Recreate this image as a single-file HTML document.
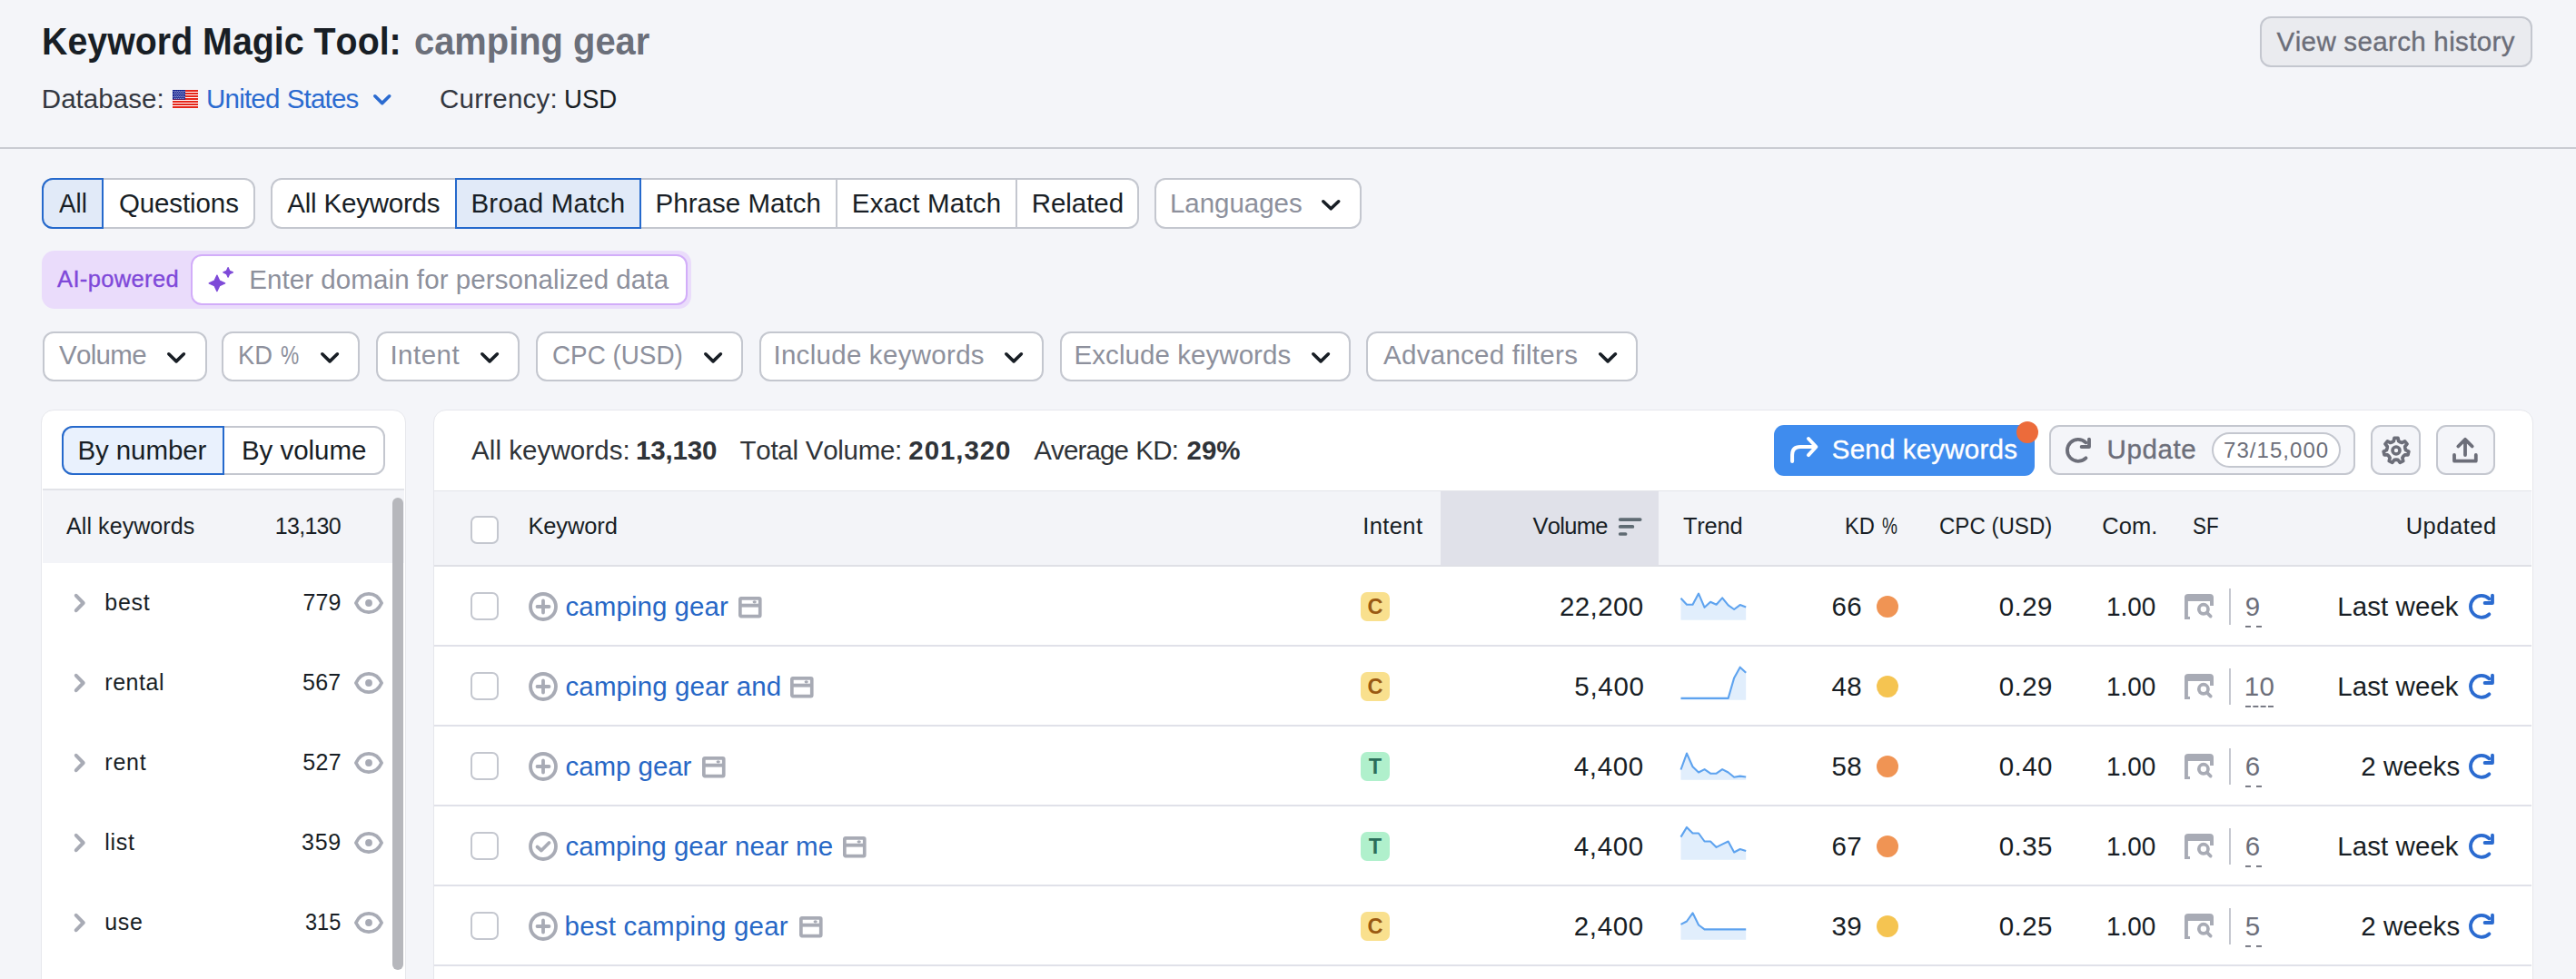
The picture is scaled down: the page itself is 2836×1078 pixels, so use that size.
<!DOCTYPE html>
<html><head><meta charset="utf-8"><title>Keyword Magic Tool</title>
<style>*{margin:0;padding:0}html,body{width:2836px;height:1078px;overflow:hidden;background:#f4f5f9;font-family:"Liberation Sans",sans-serif;position:relative}</style>
</head><body>
<div style="position:absolute;left:2488px;top:18px;width:299.5px;height:55.5px;box-sizing:border-box;border:2px solid #c4c7cf;border-radius:12px;background:#eaebef"></div>
<svg style="position:absolute;left:190px;top:99px;" width="28" height="20" viewBox="0 0 28 20"><rect width="28" height="20" fill="#fff"/><rect y="0.000" width="28" height="2.0" fill="#e5261a"/><rect y="3.000" width="28" height="2.0" fill="#e5261a"/><rect y="6.000" width="28" height="2.0" fill="#e5261a"/><rect y="9.000" width="28" height="2.0" fill="#e5261a"/><rect y="12.000" width="28" height="2.0" fill="#e5261a"/><rect y="15.000" width="28" height="2.0" fill="#e5261a"/><rect y="18.000" width="28" height="2.0" fill="#e5261a"/><rect width="14" height="10.6" fill="#0d1a8a"/><circle cx="1.20" cy="1.30" r="0.6" fill="#d0d3f0"/><circle cx="3.20" cy="1.30" r="0.6" fill="#d0d3f0"/><circle cx="5.20" cy="1.30" r="0.6" fill="#d0d3f0"/><circle cx="7.20" cy="1.30" r="0.6" fill="#d0d3f0"/><circle cx="9.20" cy="1.30" r="0.6" fill="#d0d3f0"/><circle cx="11.20" cy="1.30" r="0.6" fill="#d0d3f0"/><circle cx="13.20" cy="1.30" r="0.6" fill="#d0d3f0"/><circle cx="2.20" cy="2.90" r="0.6" fill="#d0d3f0"/><circle cx="4.20" cy="2.90" r="0.6" fill="#d0d3f0"/><circle cx="6.20" cy="2.90" r="0.6" fill="#d0d3f0"/><circle cx="8.20" cy="2.90" r="0.6" fill="#d0d3f0"/><circle cx="10.20" cy="2.90" r="0.6" fill="#d0d3f0"/><circle cx="12.20" cy="2.90" r="0.6" fill="#d0d3f0"/><circle cx="1.20" cy="4.50" r="0.6" fill="#d0d3f0"/><circle cx="3.20" cy="4.50" r="0.6" fill="#d0d3f0"/><circle cx="5.20" cy="4.50" r="0.6" fill="#d0d3f0"/><circle cx="7.20" cy="4.50" r="0.6" fill="#d0d3f0"/><circle cx="9.20" cy="4.50" r="0.6" fill="#d0d3f0"/><circle cx="11.20" cy="4.50" r="0.6" fill="#d0d3f0"/><circle cx="13.20" cy="4.50" r="0.6" fill="#d0d3f0"/><circle cx="2.20" cy="6.10" r="0.6" fill="#d0d3f0"/><circle cx="4.20" cy="6.10" r="0.6" fill="#d0d3f0"/><circle cx="6.20" cy="6.10" r="0.6" fill="#d0d3f0"/><circle cx="8.20" cy="6.10" r="0.6" fill="#d0d3f0"/><circle cx="10.20" cy="6.10" r="0.6" fill="#d0d3f0"/><circle cx="12.20" cy="6.10" r="0.6" fill="#d0d3f0"/><circle cx="1.20" cy="7.70" r="0.6" fill="#d0d3f0"/><circle cx="3.20" cy="7.70" r="0.6" fill="#d0d3f0"/><circle cx="5.20" cy="7.70" r="0.6" fill="#d0d3f0"/><circle cx="7.20" cy="7.70" r="0.6" fill="#d0d3f0"/><circle cx="9.20" cy="7.70" r="0.6" fill="#d0d3f0"/><circle cx="11.20" cy="7.70" r="0.6" fill="#d0d3f0"/><circle cx="13.20" cy="7.70" r="0.6" fill="#d0d3f0"/><circle cx="2.20" cy="9.30" r="0.6" fill="#d0d3f0"/><circle cx="4.20" cy="9.30" r="0.6" fill="#d0d3f0"/><circle cx="6.20" cy="9.30" r="0.6" fill="#d0d3f0"/><circle cx="8.20" cy="9.30" r="0.6" fill="#d0d3f0"/><circle cx="10.20" cy="9.30" r="0.6" fill="#d0d3f0"/><circle cx="12.20" cy="9.30" r="0.6" fill="#d0d3f0"/></svg>
<svg style="position:absolute;left:407.5px;top:101.2px;" width="25.5" height="17.4" viewBox="0 0 25.5 17.4"><path d="M4.8 4.8 L12.75 12.6 L20.7 4.8" stroke="#2b6bd0" stroke-width="3.6" fill="none" stroke-linecap="round" stroke-linejoin="round"/></svg>
<div style="position:absolute;left:0px;top:162px;width:2836px;height:2px;background:#c9cbd2"></div>
<div style="position:absolute;left:46px;top:196px;width:234.5px;height:55.5px;box-sizing:border-box;border:2px solid #c4c7cf;border-radius:12px;background:#fff"></div>
<div style="position:absolute;left:46px;top:196px;width:67.8px;height:55.5px;box-sizing:border-box;border:2px solid #2569cc;border-radius:12px 0 0 12px;background:#e1eaf8"></div>
<div style="position:absolute;left:297.5px;top:196px;width:956.3px;height:55.5px;box-sizing:border-box;border:2px solid #c4c7cf;border-radius:12px;background:#fff"></div>
<div style="position:absolute;left:501px;top:196px;width:205px;height:55.5px;box-sizing:border-box;border:2px solid #2569cc;background:#e1eaf8"></div>
<div style="position:absolute;left:920px;top:197px;width:2px;height:53.5px;background:#c4c7cf"></div>
<div style="position:absolute;left:1118.3px;top:197px;width:2.0px;height:53.5px;background:#c4c7cf"></div>
<div style="position:absolute;left:1270.5px;top:196px;width:228.0px;height:55.5px;box-sizing:border-box;border:2px solid #c4c7cf;border-radius:12px;background:#fff"></div>
<svg style="position:absolute;left:1452px;top:217.3px;" width="26.5" height="17.6" viewBox="0 0 26.5 17.6"><path d="M4.8 4.8 L13.25 12.799999999999999 L21.7 4.8" stroke="#181e25" stroke-width="3.6" fill="none" stroke-linecap="round" stroke-linejoin="round"/></svg>
<div style="position:absolute;left:46px;top:276px;width:715px;height:63.5px;background:#eadcfb;border-radius:14px"></div>
<div style="position:absolute;left:209.5px;top:280px;width:547.3px;height:55.80000000000001px;box-sizing:border-box;border:2px solid #d2adf9;border-radius:12px;background:#fff"></div>
<svg style="position:absolute;left:220px;top:288px;" width="45" height="40" viewBox="0 0 45 40"><path d="M18.90 15.10 L21.72 21.08 L27.70 23.90 L21.72 26.72 L18.90 32.70 L16.08 26.72 L10.10 23.90 L16.08 21.08Z M31.10 6.60 L32.80 10.20 L36.40 11.90 L32.80 13.60 L31.10 17.20 L29.40 13.60 L25.80 11.90 L29.40 10.20Z" fill="#7e4ad8" stroke="#7e4ad8" stroke-width="1.2" stroke-linejoin="round"/></svg>
<div style="position:absolute;left:46.5px;top:364.5px;width:181.0px;height:55.0px;box-sizing:border-box;border:2px solid #c4c7cf;border-radius:12px;background:#fff"></div>
<svg style="position:absolute;left:181.0px;top:385px;" width="26.2" height="17.7" viewBox="0 0 26.2 17.7"><path d="M4.8 4.8 L13.1 12.899999999999999 L21.4 4.8" stroke="#181e25" stroke-width="3.6" fill="none" stroke-linecap="round" stroke-linejoin="round"/></svg>
<div style="position:absolute;left:244.3px;top:364.5px;width:152.2px;height:55.0px;box-sizing:border-box;border:2px solid #c4c7cf;border-radius:12px;background:#fff"></div>
<svg style="position:absolute;left:350.0px;top:385px;" width="26.2" height="17.7" viewBox="0 0 26.2 17.7"><path d="M4.8 4.8 L13.1 12.899999999999999 L21.4 4.8" stroke="#181e25" stroke-width="3.6" fill="none" stroke-linecap="round" stroke-linejoin="round"/></svg>
<div style="position:absolute;left:413.5px;top:364.5px;width:158.70000000000005px;height:55.0px;box-sizing:border-box;border:2px solid #c4c7cf;border-radius:12px;background:#fff"></div>
<svg style="position:absolute;left:525.7px;top:385px;" width="26.2" height="17.7" viewBox="0 0 26.2 17.7"><path d="M4.8 4.8 L13.1 12.899999999999999 L21.4 4.8" stroke="#181e25" stroke-width="3.6" fill="none" stroke-linecap="round" stroke-linejoin="round"/></svg>
<div style="position:absolute;left:589.6px;top:364.5px;width:228.69999999999993px;height:55.0px;box-sizing:border-box;border:2px solid #c4c7cf;border-radius:12px;background:#fff"></div>
<svg style="position:absolute;left:771.8px;top:385px;" width="26.2" height="17.7" viewBox="0 0 26.2 17.7"><path d="M4.8 4.8 L13.1 12.899999999999999 L21.4 4.8" stroke="#181e25" stroke-width="3.6" fill="none" stroke-linecap="round" stroke-linejoin="round"/></svg>
<div style="position:absolute;left:835.6px;top:364.5px;width:313.6px;height:55.0px;box-sizing:border-box;border:2px solid #c4c7cf;border-radius:12px;background:#fff"></div>
<svg style="position:absolute;left:1102.7px;top:385px;" width="26.2" height="17.7" viewBox="0 0 26.2 17.7"><path d="M4.8 4.8 L13.1 12.899999999999999 L21.4 4.8" stroke="#181e25" stroke-width="3.6" fill="none" stroke-linecap="round" stroke-linejoin="round"/></svg>
<div style="position:absolute;left:1166.5px;top:364.5px;width:320.5px;height:55.0px;box-sizing:border-box;border:2px solid #c4c7cf;border-radius:12px;background:#fff"></div>
<svg style="position:absolute;left:1440.5px;top:385px;" width="26.2" height="17.7" viewBox="0 0 26.2 17.7"><path d="M4.8 4.8 L13.1 12.899999999999999 L21.4 4.8" stroke="#181e25" stroke-width="3.6" fill="none" stroke-linecap="round" stroke-linejoin="round"/></svg>
<div style="position:absolute;left:1504.3px;top:364.5px;width:298.70000000000005px;height:55.0px;box-sizing:border-box;border:2px solid #c4c7cf;border-radius:12px;background:#fff"></div>
<svg style="position:absolute;left:1756.5px;top:385px;" width="26.2" height="17.7" viewBox="0 0 26.2 17.7"><path d="M4.8 4.8 L13.1 12.899999999999999 L21.4 4.8" stroke="#181e25" stroke-width="3.6" fill="none" stroke-linecap="round" stroke-linejoin="round"/></svg>
<div style="position:absolute;left:45px;top:451px;width:401.8px;height:647px;box-sizing:border-box;border:1.5px solid #e6e7ec;border-radius:14px 14px 0 0;background:#fff"></div>
<div style="position:absolute;left:67.6px;top:468.5px;width:356.70000000000005px;height:54.700000000000045px;box-sizing:border-box;border:2px solid #c4c7cf;border-radius:12px;background:#fff"></div>
<div style="position:absolute;left:67.6px;top:468.5px;width:179.0px;height:54.700000000000045px;box-sizing:border-box;border:2px solid #2569cc;border-radius:12px 0 0 12px;background:#e9f1fd"></div>
<div style="position:absolute;left:46.5px;top:538px;width:398.8px;height:2px;background:#e2e3e8"></div>
<div style="position:absolute;left:46.5px;top:540px;width:398.8px;height:79.70000000000005px;background:#f3f4f8"></div>
<div style="position:absolute;left:432px;top:548px;width:11.800000000000011px;height:519.5999999999999px;background:#b6b7bc;border-radius:6px"></div>
<svg style="position:absolute;left:80px;top:652px;" width="16" height="24" viewBox="0 0 16 24"><path d="M3.8 3.8 L11.7 12 L3.8 20.2" fill="none" stroke="#a8abb5" stroke-width="4" stroke-linecap="round" stroke-linejoin="round"/></svg>
<svg style="position:absolute;left:390px;top:652px;" width="32" height="24" viewBox="0 0 32 24"><path d="M1.9 12 C8 -1.5 24 -1.5 30.1 12 C24 25.5 8 25.5 1.9 12Z" fill="none" stroke="#a8abb5" stroke-width="3.7" stroke-linejoin="round"/><circle cx="16" cy="12" r="3.9" fill="#a8abb5"/></svg>
<svg style="position:absolute;left:80px;top:740px;" width="16" height="24" viewBox="0 0 16 24"><path d="M3.8 3.8 L11.7 12 L3.8 20.2" fill="none" stroke="#a8abb5" stroke-width="4" stroke-linecap="round" stroke-linejoin="round"/></svg>
<svg style="position:absolute;left:390px;top:740px;" width="32" height="24" viewBox="0 0 32 24"><path d="M1.9 12 C8 -1.5 24 -1.5 30.1 12 C24 25.5 8 25.5 1.9 12Z" fill="none" stroke="#a8abb5" stroke-width="3.7" stroke-linejoin="round"/><circle cx="16" cy="12" r="3.9" fill="#a8abb5"/></svg>
<svg style="position:absolute;left:80px;top:828px;" width="16" height="24" viewBox="0 0 16 24"><path d="M3.8 3.8 L11.7 12 L3.8 20.2" fill="none" stroke="#a8abb5" stroke-width="4" stroke-linecap="round" stroke-linejoin="round"/></svg>
<svg style="position:absolute;left:390px;top:828px;" width="32" height="24" viewBox="0 0 32 24"><path d="M1.9 12 C8 -1.5 24 -1.5 30.1 12 C24 25.5 8 25.5 1.9 12Z" fill="none" stroke="#a8abb5" stroke-width="3.7" stroke-linejoin="round"/><circle cx="16" cy="12" r="3.9" fill="#a8abb5"/></svg>
<svg style="position:absolute;left:80px;top:916px;" width="16" height="24" viewBox="0 0 16 24"><path d="M3.8 3.8 L11.7 12 L3.8 20.2" fill="none" stroke="#a8abb5" stroke-width="4" stroke-linecap="round" stroke-linejoin="round"/></svg>
<svg style="position:absolute;left:390px;top:916px;" width="32" height="24" viewBox="0 0 32 24"><path d="M1.9 12 C8 -1.5 24 -1.5 30.1 12 C24 25.5 8 25.5 1.9 12Z" fill="none" stroke="#a8abb5" stroke-width="3.7" stroke-linejoin="round"/><circle cx="16" cy="12" r="3.9" fill="#a8abb5"/></svg>
<svg style="position:absolute;left:80px;top:1004px;" width="16" height="24" viewBox="0 0 16 24"><path d="M3.8 3.8 L11.7 12 L3.8 20.2" fill="none" stroke="#a8abb5" stroke-width="4" stroke-linecap="round" stroke-linejoin="round"/></svg>
<svg style="position:absolute;left:390px;top:1004px;" width="32" height="24" viewBox="0 0 32 24"><path d="M1.9 12 C8 -1.5 24 -1.5 30.1 12 C24 25.5 8 25.5 1.9 12Z" fill="none" stroke="#a8abb5" stroke-width="3.7" stroke-linejoin="round"/><circle cx="16" cy="12" r="3.9" fill="#a8abb5"/></svg>
<div style="position:absolute;left:476.8px;top:450.8px;width:2312.2px;height:647.2px;box-sizing:border-box;border:1.5px solid #e6e7ec;border-radius:14px 14px 0 0;background:#fff"></div>
<div style="position:absolute;left:1953px;top:468px;width:287px;height:55.799999999999955px;background:#3f8cee;border-radius:11px"></div>
<svg style="position:absolute;left:1965px;top:478px;" width="42" height="36" viewBox="0 0 42 36"><path d="M8.1 30 L8.1 23 Q8.1 14 17 14 L33.5 14 M26 5 L34.4 14 L26 23.1" fill="none" stroke="#fff" stroke-width="4" stroke-linecap="round" stroke-linejoin="round"/></svg>
<div style="position:absolute;left:2220px;top:463.8px;width:24px;height:24px;border-radius:50%;background:#ec6b3b"></div>
<div style="position:absolute;left:2256.4px;top:468.4px;width:336.9000000000001px;height:55.0px;box-sizing:border-box;border:2px solid #c4c7cf;border-radius:11px;background:#f4f5f9"></div>
<svg style="position:absolute;left:2274px;top:482px;overflow:visible" width="28" height="28" viewBox="0 0 28 28"><path d="M22.4 22.3 A12 12 0 1 1 22.4 5.3" fill="none" stroke="#6c6e79" stroke-width="3.8" stroke-linecap="round"/><path d="M17.6 10 L26 10 L26 1.6" fill="none" stroke="#6c6e79" stroke-width="3.8" stroke-linecap="round" stroke-linejoin="round"/></svg>
<div style="position:absolute;left:2434.7px;top:476.3px;width:141.9000000000001px;height:39.099999999999966px;box-sizing:border-box;border:2px solid #c4c7cf;border-radius:20px;background:#fff"></div>
<div style="position:absolute;left:2610.4px;top:468.4px;width:54.90000000000009px;height:55.0px;box-sizing:border-box;border:2px solid #c4c7cf;border-radius:11px;background:#f4f5f9"></div>
<div style="position:absolute;left:2682.3px;top:468.4px;width:65.19999999999982px;height:55.0px;box-sizing:border-box;border:2px solid #c4c7cf;border-radius:11px;background:#f4f5f9"></div>
<svg style="position:absolute;left:2621.8px;top:479.8px;" width="32" height="32" viewBox="0 0 32 32"><path d="M11.58 6.81 L13.26 5.76 L14.07 2.24 L17.93 2.24 L18.74 5.76 L20.43 6.81 L22.29 7.47 L25.56 5.91 L27.97 8.93 L25.72 11.76 L25.94 13.73 L26.59 15.60 L29.85 17.18 L28.99 20.95 L25.37 20.95 L23.97 22.36 L22.91 24.03 L23.72 27.56 L20.23 29.24 L17.97 26.42 L16.00 26.20 L14.03 26.42 L11.77 29.24 L8.28 27.56 L9.09 24.03 L8.02 22.36 L6.63 20.95 L3.01 20.95 L2.15 17.18 L5.41 15.60 L6.06 13.73 L6.28 11.76 L4.03 8.93 L6.44 5.91 L9.71 7.47 Z" fill="none" stroke="#6c6e79" stroke-width="3.7" stroke-linejoin="round"/><circle cx="16" cy="16" r="4" fill="none" stroke="#6c6e79" stroke-width="3.6"/></svg>
<svg style="position:absolute;left:2698px;top:480px;" width="32" height="32" viewBox="0 0 32 32"><path d="M16 21 L16 4.5 M8.3 11.5 L16 3.8 L23.7 11.5 M4 21 L4 27.6 L27.8 27.6 L27.8 21" fill="none" stroke="#6c6e79" stroke-width="3.8" stroke-linecap="round" stroke-linejoin="round"/></svg>
<div style="position:absolute;left:478.3px;top:540px;width:2309.2px;height:82px;background:#f3f4f8"></div>
<div style="position:absolute;left:478.3px;top:540px;width:2309.2px;height:1.2000000000000455px;background:#e3e4e9"></div>
<div style="position:absolute;left:1586px;top:541.2px;width:239.79999999999995px;height:80.79999999999995px;background:#e0e1e9"></div>
<div style="position:absolute;left:478.3px;top:622px;width:2309.2px;height:2px;background:#dfe0e6"></div>
<div style="position:absolute;left:518.3px;top:568.3px;width:31.200000000000045px;height:31.200000000000045px;box-sizing:border-box;border:2px solid #c4c7cf;border-radius:7px;background:#fff"></div>
<svg style="position:absolute;left:1780px;top:568px;" width="28" height="24" viewBox="0 0 28 24"><g stroke="#5f6b73" stroke-width="3.7" stroke-linecap="round"><path d="M3.7 4.1 L25.7 4.1"/><path d="M3.7 11.9 L17.4 11.9"/><path d="M3.7 20 L9.6 20"/></g></svg>
<div style="position:absolute;left:478.3px;top:710px;width:2309.2px;height:2px;background:#e0e1e9"></div>
<div style="position:absolute;left:518.3px;top:652px;width:31.200000000000045px;height:31.200000000000045px;box-sizing:border-box;border:2px solid #c4c7cf;border-radius:7px;background:#fff"></div>
<svg style="position:absolute;left:582px;top:652px;" width="32" height="32" viewBox="0 0 32 32"><circle cx="16" cy="16" r="14" fill="none" stroke="#a8abb5" stroke-width="3.8"/><path d="M16 9.5 L16 22.5 M9.5 16 L22.5 16" stroke="#a8abb5" stroke-width="3.8" stroke-linecap="round"/></svg>
<svg style="position:absolute;left:813.2px;top:657.2px;" width="26" height="24" viewBox="0 0 26 24"><rect x="1.85" y="1.85" width="21.9" height="19.7" rx="1" fill="none" stroke="#a8abb5" stroke-width="3.7"/><path d="M2 9.65 L24 9.65" stroke="#a8abb5" stroke-width="3.9"/><ellipse cx="17.7" cy="5.8" rx="2.1" ry="1.6" fill="#a8abb5"/></svg>
<div style="position:absolute;left:1498px;top:652px;width:32px;height:32px;border-radius:7px;background:#f9e08e;color:#9a5a12;font:bold 23.5px/33px 'Liberation Sans',sans-serif;text-align:center">C</div>
<svg style="position:absolute;left:1848.5px;top:624px;" width="76" height="62" viewBox="0 0 76 62"><path d="M1.5 58.8 L1.50 34.70 L8.02 41.80 L14.54 41.80 L21.05 29.60 L27.57 44.80 L34.09 38.70 L40.61 41.80 L47.13 34.40 L53.65 42.40 L60.16 47.00 L66.68 42.10 L73.20 44.50 L73.2 58.8Z" fill="#e1eefc"/><polyline points="1.50,34.70 8.02,41.80 14.54,41.80 21.05,29.60 27.57,44.80 34.09,38.70 40.61,41.80 47.13,34.40 53.65,42.40 60.16,47.00 66.68,42.10 73.20,44.50" fill="none" stroke="#5ea3ef" stroke-width="2.1" stroke-linejoin="round"/></svg>
<div style="position:absolute;left:2066px;top:656px;width:24px;height:24px;border-radius:50%;background:#f09454"></div>
<svg style="position:absolute;left:2405px;top:654px;" width="32" height="28" viewBox="0 0 32 28"><path d="M6 27 L1.9 27 L1.9 4.1 Q1.9 2 4 2 L27.9 2 Q30 2 30 4.1 L30 13" fill="none" stroke="#a8abb5" stroke-width="4" stroke-linejoin="round"/><path d="M1.9 5 L30 5" stroke="#a8abb5" stroke-width="6"/><circle cx="20.9" cy="16.8" r="5.1" fill="none" stroke="#a8abb5" stroke-width="3.7"/><path d="M24.6 20.5 L28.7 24.6" stroke="#a8abb5" stroke-width="3.7" stroke-linecap="round"/></svg>
<div style="position:absolute;left:2454.3px;top:648.2px;width:2.0px;height:39.69999999999993px;background:#c4c7cf"></div>
<svg style="position:absolute;left:2472px;top:689px;" width="18" height="2" viewBox="0 0 18 2"><rect x="0" y="0" width="6" height="1.8" fill="#6c6e79"/><rect x="12" y="0" width="6" height="1.8" fill="#6c6e79"/></svg>
<svg style="position:absolute;left:2718px;top:654px;overflow:visible" width="28" height="28" viewBox="0 0 28 28"><path d="M22.4 22.3 A12 12 0 1 1 22.4 5.3" fill="none" stroke="#2b6bd0" stroke-width="3.8" stroke-linecap="round"/><path d="M17.6 10 L26 10 L26 1.6" fill="none" stroke="#2b6bd0" stroke-width="3.8" stroke-linecap="round" stroke-linejoin="round"/></svg>
<div style="position:absolute;left:478.3px;top:798px;width:2309.2px;height:2px;background:#e0e1e9"></div>
<div style="position:absolute;left:518.3px;top:740px;width:31.200000000000045px;height:31.200000000000045px;box-sizing:border-box;border:2px solid #c4c7cf;border-radius:7px;background:#fff"></div>
<svg style="position:absolute;left:582px;top:740px;" width="32" height="32" viewBox="0 0 32 32"><circle cx="16" cy="16" r="14" fill="none" stroke="#a8abb5" stroke-width="3.8"/><path d="M16 9.5 L16 22.5 M9.5 16 L22.5 16" stroke="#a8abb5" stroke-width="3.8" stroke-linecap="round"/></svg>
<svg style="position:absolute;left:869.5px;top:745.2px;" width="26" height="24" viewBox="0 0 26 24"><rect x="1.85" y="1.85" width="21.9" height="19.7" rx="1" fill="none" stroke="#a8abb5" stroke-width="3.7"/><path d="M2 9.65 L24 9.65" stroke="#a8abb5" stroke-width="3.9"/><ellipse cx="17.7" cy="5.8" rx="2.1" ry="1.6" fill="#a8abb5"/></svg>
<div style="position:absolute;left:1498px;top:740px;width:32px;height:32px;border-radius:7px;background:#f9e08e;color:#9a5a12;font:bold 23.5px/33px 'Liberation Sans',sans-serif;text-align:center">C</div>
<svg style="position:absolute;left:1848.5px;top:712px;" width="76" height="62" viewBox="0 0 76 62"><path d="M1.5 58.8 L1.50 56.90 L8.02 56.90 L14.54 56.90 L21.05 56.90 L27.57 56.90 L34.09 56.90 L40.61 56.90 L47.13 56.90 L53.65 56.90 L60.16 34.40 L66.68 22.70 L73.20 28.80 L73.2 58.8Z" fill="#e1eefc"/><polyline points="1.50,56.90 8.02,56.90 14.54,56.90 21.05,56.90 27.57,56.90 34.09,56.90 40.61,56.90 47.13,56.90 53.65,56.90 60.16,34.40 66.68,22.70 73.20,28.80" fill="none" stroke="#5ea3ef" stroke-width="2.1" stroke-linejoin="round"/></svg>
<div style="position:absolute;left:2066px;top:744px;width:24px;height:24px;border-radius:50%;background:#f5c451"></div>
<svg style="position:absolute;left:2405px;top:742px;" width="32" height="28" viewBox="0 0 32 28"><path d="M6 27 L1.9 27 L1.9 4.1 Q1.9 2 4 2 L27.9 2 Q30 2 30 4.1 L30 13" fill="none" stroke="#a8abb5" stroke-width="4" stroke-linejoin="round"/><path d="M1.9 5 L30 5" stroke="#a8abb5" stroke-width="6"/><circle cx="20.9" cy="16.8" r="5.1" fill="none" stroke="#a8abb5" stroke-width="3.7"/><path d="M24.6 20.5 L28.7 24.6" stroke="#a8abb5" stroke-width="3.7" stroke-linecap="round"/></svg>
<div style="position:absolute;left:2454.3px;top:736.2px;width:2.0px;height:39.69999999999993px;background:#c4c7cf"></div>
<svg style="position:absolute;left:2472px;top:777px;" width="31" height="2" viewBox="0 0 31 2"><rect x="0.00" y="0" width="6" height="1.8" fill="#6c6e79"/><rect x="8.33" y="0" width="6" height="1.8" fill="#6c6e79"/><rect x="16.66" y="0" width="6" height="1.8" fill="#6c6e79"/><rect x="24.99" y="0" width="6" height="1.8" fill="#6c6e79"/></svg>
<svg style="position:absolute;left:2718px;top:742px;overflow:visible" width="28" height="28" viewBox="0 0 28 28"><path d="M22.4 22.3 A12 12 0 1 1 22.4 5.3" fill="none" stroke="#2b6bd0" stroke-width="3.8" stroke-linecap="round"/><path d="M17.6 10 L26 10 L26 1.6" fill="none" stroke="#2b6bd0" stroke-width="3.8" stroke-linecap="round" stroke-linejoin="round"/></svg>
<div style="position:absolute;left:478.3px;top:886px;width:2309.2px;height:2px;background:#e0e1e9"></div>
<div style="position:absolute;left:518.3px;top:828px;width:31.200000000000045px;height:31.200000000000045px;box-sizing:border-box;border:2px solid #c4c7cf;border-radius:7px;background:#fff"></div>
<svg style="position:absolute;left:582px;top:828px;" width="32" height="32" viewBox="0 0 32 32"><circle cx="16" cy="16" r="14" fill="none" stroke="#a8abb5" stroke-width="3.8"/><path d="M16 9.5 L16 22.5 M9.5 16 L22.5 16" stroke="#a8abb5" stroke-width="3.8" stroke-linecap="round"/></svg>
<svg style="position:absolute;left:772.5px;top:833.2px;" width="26" height="24" viewBox="0 0 26 24"><rect x="1.85" y="1.85" width="21.9" height="19.7" rx="1" fill="none" stroke="#a8abb5" stroke-width="3.7"/><path d="M2 9.65 L24 9.65" stroke="#a8abb5" stroke-width="3.9"/><ellipse cx="17.7" cy="5.8" rx="2.1" ry="1.6" fill="#a8abb5"/></svg>
<div style="position:absolute;left:1498px;top:828px;width:32px;height:32px;border-radius:7px;background:#b0f0cc;color:#2b6e5a;font:bold 23.5px/33px 'Liberation Sans',sans-serif;text-align:center">T</div>
<svg style="position:absolute;left:1848.5px;top:800px;" width="76" height="62" viewBox="0 0 76 62"><path d="M1.5 58.8 L1.50 47.50 L8.02 29.60 L14.54 44.30 L21.05 50.50 L27.57 47.10 L34.09 51.70 L40.61 51.70 L47.13 47.10 L53.65 50.50 L60.16 55.70 L66.68 54.60 L73.20 55.50 L73.2 58.8Z" fill="#e1eefc"/><polyline points="1.50,47.50 8.02,29.60 14.54,44.30 21.05,50.50 27.57,47.10 34.09,51.70 40.61,51.70 47.13,47.10 53.65,50.50 60.16,55.70 66.68,54.60 73.20,55.50" fill="none" stroke="#5ea3ef" stroke-width="2.1" stroke-linejoin="round"/></svg>
<div style="position:absolute;left:2066px;top:832px;width:24px;height:24px;border-radius:50%;background:#f09454"></div>
<svg style="position:absolute;left:2405px;top:830px;" width="32" height="28" viewBox="0 0 32 28"><path d="M6 27 L1.9 27 L1.9 4.1 Q1.9 2 4 2 L27.9 2 Q30 2 30 4.1 L30 13" fill="none" stroke="#a8abb5" stroke-width="4" stroke-linejoin="round"/><path d="M1.9 5 L30 5" stroke="#a8abb5" stroke-width="6"/><circle cx="20.9" cy="16.8" r="5.1" fill="none" stroke="#a8abb5" stroke-width="3.7"/><path d="M24.6 20.5 L28.7 24.6" stroke="#a8abb5" stroke-width="3.7" stroke-linecap="round"/></svg>
<div style="position:absolute;left:2454.3px;top:824.2px;width:2.0px;height:39.69999999999993px;background:#c4c7cf"></div>
<svg style="position:absolute;left:2472px;top:865px;" width="18" height="2" viewBox="0 0 18 2"><rect x="0" y="0" width="6" height="1.8" fill="#6c6e79"/><rect x="12" y="0" width="6" height="1.8" fill="#6c6e79"/></svg>
<svg style="position:absolute;left:2718px;top:830px;overflow:visible" width="28" height="28" viewBox="0 0 28 28"><path d="M22.4 22.3 A12 12 0 1 1 22.4 5.3" fill="none" stroke="#2b6bd0" stroke-width="3.8" stroke-linecap="round"/><path d="M17.6 10 L26 10 L26 1.6" fill="none" stroke="#2b6bd0" stroke-width="3.8" stroke-linecap="round" stroke-linejoin="round"/></svg>
<div style="position:absolute;left:478.3px;top:974px;width:2309.2px;height:2px;background:#e0e1e9"></div>
<div style="position:absolute;left:518.3px;top:916px;width:31.200000000000045px;height:31.200000000000045px;box-sizing:border-box;border:2px solid #c4c7cf;border-radius:7px;background:#fff"></div>
<svg style="position:absolute;left:582px;top:916px;" width="32" height="32" viewBox="0 0 32 32"><circle cx="16" cy="16" r="14" fill="none" stroke="#a8abb5" stroke-width="3.8"/><path d="M9.5 16.5 L14 20.5 L22.5 12" fill="none" stroke="#a8abb5" stroke-width="3.8" stroke-linecap="round" stroke-linejoin="round"/></svg>
<svg style="position:absolute;left:927.8px;top:921.2px;" width="26" height="24" viewBox="0 0 26 24"><rect x="1.85" y="1.85" width="21.9" height="19.7" rx="1" fill="none" stroke="#a8abb5" stroke-width="3.7"/><path d="M2 9.65 L24 9.65" stroke="#a8abb5" stroke-width="3.9"/><ellipse cx="17.7" cy="5.8" rx="2.1" ry="1.6" fill="#a8abb5"/></svg>
<div style="position:absolute;left:1498px;top:916px;width:32px;height:32px;border-radius:7px;background:#b0f0cc;color:#2b6e5a;font:bold 23.5px/33px 'Liberation Sans',sans-serif;text-align:center">T</div>
<svg style="position:absolute;left:1848.5px;top:888px;" width="76" height="62" viewBox="0 0 76 62"><path d="M1.5 58.8 L1.50 33.60 L8.02 22.90 L14.54 29.50 L21.05 29.50 L27.57 38.50 L34.09 38.50 L40.61 44.90 L47.13 41.60 L53.65 38.50 L60.16 50.50 L66.68 47.00 L73.20 48.90 L73.2 58.8Z" fill="#e1eefc"/><polyline points="1.50,33.60 8.02,22.90 14.54,29.50 21.05,29.50 27.57,38.50 34.09,38.50 40.61,44.90 47.13,41.60 53.65,38.50 60.16,50.50 66.68,47.00 73.20,48.90" fill="none" stroke="#5ea3ef" stroke-width="2.1" stroke-linejoin="round"/></svg>
<div style="position:absolute;left:2066px;top:920px;width:24px;height:24px;border-radius:50%;background:#f09454"></div>
<svg style="position:absolute;left:2405px;top:918px;" width="32" height="28" viewBox="0 0 32 28"><path d="M6 27 L1.9 27 L1.9 4.1 Q1.9 2 4 2 L27.9 2 Q30 2 30 4.1 L30 13" fill="none" stroke="#a8abb5" stroke-width="4" stroke-linejoin="round"/><path d="M1.9 5 L30 5" stroke="#a8abb5" stroke-width="6"/><circle cx="20.9" cy="16.8" r="5.1" fill="none" stroke="#a8abb5" stroke-width="3.7"/><path d="M24.6 20.5 L28.7 24.6" stroke="#a8abb5" stroke-width="3.7" stroke-linecap="round"/></svg>
<div style="position:absolute;left:2454.3px;top:912.2px;width:2.0px;height:39.69999999999993px;background:#c4c7cf"></div>
<svg style="position:absolute;left:2472px;top:953px;" width="18" height="2" viewBox="0 0 18 2"><rect x="0" y="0" width="6" height="1.8" fill="#6c6e79"/><rect x="12" y="0" width="6" height="1.8" fill="#6c6e79"/></svg>
<svg style="position:absolute;left:2718px;top:918px;overflow:visible" width="28" height="28" viewBox="0 0 28 28"><path d="M22.4 22.3 A12 12 0 1 1 22.4 5.3" fill="none" stroke="#2b6bd0" stroke-width="3.8" stroke-linecap="round"/><path d="M17.6 10 L26 10 L26 1.6" fill="none" stroke="#2b6bd0" stroke-width="3.8" stroke-linecap="round" stroke-linejoin="round"/></svg>
<div style="position:absolute;left:478.3px;top:1062px;width:2309.2px;height:2px;background:#e0e1e9"></div>
<div style="position:absolute;left:518.3px;top:1004px;width:31.200000000000045px;height:31.200000000000045px;box-sizing:border-box;border:2px solid #c4c7cf;border-radius:7px;background:#fff"></div>
<svg style="position:absolute;left:582px;top:1004px;" width="32" height="32" viewBox="0 0 32 32"><circle cx="16" cy="16" r="14" fill="none" stroke="#a8abb5" stroke-width="3.8"/><path d="M16 9.5 L16 22.5 M9.5 16 L22.5 16" stroke="#a8abb5" stroke-width="3.8" stroke-linecap="round"/></svg>
<svg style="position:absolute;left:879.5px;top:1009.2px;" width="26" height="24" viewBox="0 0 26 24"><rect x="1.85" y="1.85" width="21.9" height="19.7" rx="1" fill="none" stroke="#a8abb5" stroke-width="3.7"/><path d="M2 9.65 L24 9.65" stroke="#a8abb5" stroke-width="3.9"/><ellipse cx="17.7" cy="5.8" rx="2.1" ry="1.6" fill="#a8abb5"/></svg>
<div style="position:absolute;left:1498px;top:1004px;width:32px;height:32px;border-radius:7px;background:#f9e08e;color:#9a5a12;font:bold 23.5px/33px 'Liberation Sans',sans-serif;text-align:center">C</div>
<svg style="position:absolute;left:1848.5px;top:976px;" width="76" height="62" viewBox="0 0 76 62"><path d="M1.5 58.8 L1.50 41.90 L8.02 38.50 L14.54 29.30 L21.05 42.50 L27.57 47.40 L34.09 47.40 L40.61 47.40 L47.13 47.40 L53.65 47.40 L60.16 47.40 L66.68 47.40 L73.20 47.40 L73.2 58.8Z" fill="#e1eefc"/><polyline points="1.50,41.90 8.02,38.50 14.54,29.30 21.05,42.50 27.57,47.40 34.09,47.40 40.61,47.40 47.13,47.40 53.65,47.40 60.16,47.40 66.68,47.40 73.20,47.40" fill="none" stroke="#5ea3ef" stroke-width="2.1" stroke-linejoin="round"/></svg>
<div style="position:absolute;left:2066px;top:1008px;width:24px;height:24px;border-radius:50%;background:#f5c451"></div>
<svg style="position:absolute;left:2405px;top:1006px;" width="32" height="28" viewBox="0 0 32 28"><path d="M6 27 L1.9 27 L1.9 4.1 Q1.9 2 4 2 L27.9 2 Q30 2 30 4.1 L30 13" fill="none" stroke="#a8abb5" stroke-width="4" stroke-linejoin="round"/><path d="M1.9 5 L30 5" stroke="#a8abb5" stroke-width="6"/><circle cx="20.9" cy="16.8" r="5.1" fill="none" stroke="#a8abb5" stroke-width="3.7"/><path d="M24.6 20.5 L28.7 24.6" stroke="#a8abb5" stroke-width="3.7" stroke-linecap="round"/></svg>
<div style="position:absolute;left:2454.3px;top:1000.2px;width:2.0px;height:39.700000000000045px;background:#c4c7cf"></div>
<svg style="position:absolute;left:2472px;top:1041px;" width="18" height="2" viewBox="0 0 18 2"><rect x="0" y="0" width="6" height="1.8" fill="#6c6e79"/><rect x="12" y="0" width="6" height="1.8" fill="#6c6e79"/></svg>
<svg style="position:absolute;left:2718px;top:1006px;overflow:visible" width="28" height="28" viewBox="0 0 28 28"><path d="M22.4 22.3 A12 12 0 1 1 22.4 5.3" fill="none" stroke="#2b6bd0" stroke-width="3.8" stroke-linecap="round"/><path d="M17.6 10 L26 10 L26 1.6" fill="none" stroke="#2b6bd0" stroke-width="3.8" stroke-linecap="round" stroke-linejoin="round"/></svg>
<div style="position:absolute;left:478.3px;top:1064px;width:2309.2px;height:14px;background:#fff"></div>
<div style="position:absolute;left:45.79px;top:46.2px;line-height:0;white-space:nowrap;color:#181e25;font-family:'Liberation Sans',sans-serif;font-size:42px;font-weight:bold;letter-spacing:0.000px;word-spacing:-0.000px;font-kerning:none;transform:scaleX(0.9369);transform-origin:0 0;">Keyword Magic Tool:</div>
<div style="position:absolute;left:455.8px;top:46.1px;line-height:0;white-space:nowrap;color:#6b6f7a;font-family:'Liberation Sans',sans-serif;font-size:42px;font-weight:bold;letter-spacing:0.000px;word-spacing:-0.000px;font-kerning:none;transform:scaleX(0.9494);transform-origin:0 0;">camping gear</div>
<div style="position:absolute;left:2506.6px;top:45.8px;line-height:0;white-space:nowrap;color:#6c6e79;font-family:'Liberation Sans',sans-serif;font-size:29.5px;font-weight:normal;letter-spacing:0.388px;word-spacing:-0.388px;-webkit-text-stroke:0.35px #6c6e79;font-kerning:none;">View search history</div>
<div style="position:absolute;left:45.8px;top:108.8px;line-height:0;white-space:nowrap;color:#333740;font-family:'Liberation Sans',sans-serif;font-size:29.5px;font-weight:normal;letter-spacing:0.038px;font-kerning:none;">Database:</div>
<div style="position:absolute;left:227.1px;top:108.8px;line-height:0;white-space:nowrap;color:#2b6bd0;font-family:'Liberation Sans',sans-serif;font-size:29.5px;font-weight:normal;letter-spacing:-0.809px;word-spacing:0.809px;font-kerning:none;">United States</div>
<div style="position:absolute;left:484px;top:108.9px;line-height:0;white-space:nowrap;color:#333740;font-family:'Liberation Sans',sans-serif;font-size:29.5px;font-weight:normal;letter-spacing:0.225px;font-kerning:none;">Currency:</div>
<div style="position:absolute;left:620.73px;top:108.9px;line-height:0;white-space:nowrap;color:#181e25;font-family:'Liberation Sans',sans-serif;font-size:29.5px;font-weight:normal;letter-spacing:0.000px;font-kerning:none;transform:scaleX(0.9356);transform-origin:0 0;">USD</div>
<div style="position:absolute;left:65.2px;top:224.3px;line-height:0;white-space:nowrap;color:#181e25;font-family:'Liberation Sans',sans-serif;font-size:29.5px;font-weight:normal;letter-spacing:0.000px;font-kerning:none;transform:scaleX(0.9419);transform-origin:0 0;">All</div>
<div style="position:absolute;left:130.9px;top:224.3px;line-height:0;white-space:nowrap;color:#181e25;font-family:'Liberation Sans',sans-serif;font-size:29.5px;font-weight:normal;letter-spacing:-0.100px;font-kerning:none;">Questions</div>
<div style="position:absolute;left:316.3px;top:224.3px;line-height:0;white-space:nowrap;color:#181e25;font-family:'Liberation Sans',sans-serif;font-size:29.5px;font-weight:normal;letter-spacing:-0.240px;word-spacing:0.240px;font-kerning:none;">All Keywords</div>
<div style="position:absolute;left:518.4px;top:224.3px;line-height:0;white-space:nowrap;color:#181e25;font-family:'Liberation Sans',sans-serif;font-size:29.5px;font-weight:normal;letter-spacing:0.267px;word-spacing:-0.267px;font-kerning:none;">Broad Match</div>
<div style="position:absolute;left:721.5px;top:224.3px;line-height:0;white-space:nowrap;color:#181e25;font-family:'Liberation Sans',sans-serif;font-size:29.5px;font-weight:normal;letter-spacing:0.040px;word-spacing:-0.040px;font-kerning:none;">Phrase Match</div>
<div style="position:absolute;left:937.8px;top:224.3px;line-height:0;white-space:nowrap;color:#181e25;font-family:'Liberation Sans',sans-serif;font-size:29.5px;font-weight:normal;letter-spacing:0.233px;word-spacing:-0.233px;font-kerning:none;">Exact Match</div>
<div style="position:absolute;left:1135.8px;top:224.3px;line-height:0;white-space:nowrap;color:#181e25;font-family:'Liberation Sans',sans-serif;font-size:29.5px;font-weight:normal;letter-spacing:-0.067px;font-kerning:none;">Related</div>
<div style="position:absolute;left:1287.9px;top:224.3px;line-height:0;white-space:nowrap;color:#8d909c;font-family:'Liberation Sans',sans-serif;font-size:29.5px;font-weight:normal;letter-spacing:-0.025px;font-kerning:none;">Languages</div>
<div style="position:absolute;left:63px;top:306.8px;line-height:0;white-space:nowrap;color:#7f49d9;font-family:'Liberation Sans',sans-serif;font-size:25.5px;font-weight:normal;letter-spacing:0.367px;-webkit-text-stroke:0.35px #7f49d9;font-kerning:none;">AI-powered</div>
<div style="position:absolute;left:274.2px;top:308.1px;line-height:0;white-space:nowrap;color:#8d909c;font-family:'Liberation Sans',sans-serif;font-size:29.5px;font-weight:normal;letter-spacing:0.093px;word-spacing:-0.093px;font-kerning:none;">Enter domain for personalized data</div>
<div style="position:absolute;left:65px;top:391px;line-height:0;white-space:nowrap;color:#8d909c;font-family:'Liberation Sans',sans-serif;font-size:29.5px;font-weight:normal;letter-spacing:-0.680px;font-kerning:none;">Volume</div>
<div style="position:absolute;left:261.65px;top:391px;line-height:0;white-space:nowrap;color:#8d909c;font-family:'Liberation Sans',sans-serif;font-size:29.5px;font-weight:normal;letter-spacing:0.000px;font-kerning:none;transform:scaleX(0.9263);transform-origin:0 0;">KD</div>
<div style="position:absolute;left:309.43px;top:391px;line-height:0;white-space:nowrap;color:#8d909c;font-family:'Liberation Sans',sans-serif;font-size:29.5px;font-weight:normal;letter-spacing:0.000px;font-kerning:none;transform:scaleX(0.7708);transform-origin:0 0;">%</div>
<div style="position:absolute;left:429.4px;top:391px;line-height:0;white-space:nowrap;color:#8d909c;font-family:'Liberation Sans',sans-serif;font-size:29.5px;font-weight:normal;letter-spacing:0.500px;font-kerning:none;">Intent</div>
<div style="position:absolute;left:607.96px;top:391px;line-height:0;white-space:nowrap;color:#8d909c;font-family:'Liberation Sans',sans-serif;font-size:29.5px;font-weight:normal;letter-spacing:0.000px;word-spacing:-0.000px;font-kerning:none;transform:scaleX(0.9433);transform-origin:0 0;">CPC (USD)</div>
<div style="position:absolute;left:851.4px;top:391px;line-height:0;white-space:nowrap;color:#8d909c;font-family:'Liberation Sans',sans-serif;font-size:29.5px;font-weight:normal;letter-spacing:0.307px;word-spacing:-0.307px;font-kerning:none;">Include keywords</div>
<div style="position:absolute;left:1182.5px;top:391px;line-height:0;white-space:nowrap;color:#8d909c;font-family:'Liberation Sans',sans-serif;font-size:29.5px;font-weight:normal;letter-spacing:0.071px;word-spacing:-0.071px;font-kerning:none;">Exclude keywords</div>
<div style="position:absolute;left:1523px;top:391px;line-height:0;white-space:nowrap;color:#8d909c;font-family:'Liberation Sans',sans-serif;font-size:29.5px;font-weight:normal;letter-spacing:0.286px;word-spacing:-0.286px;font-kerning:none;">Advanced filters</div>
<div style="position:absolute;left:85.4px;top:495.7px;line-height:0;white-space:nowrap;color:#181e25;font-family:'Liberation Sans',sans-serif;font-size:29.5px;font-weight:normal;letter-spacing:-0.100px;word-spacing:0.100px;font-kerning:none;">By number</div>
<div style="position:absolute;left:266px;top:495.7px;line-height:0;white-space:nowrap;color:#181e25;font-family:'Liberation Sans',sans-serif;font-size:29.5px;font-weight:normal;letter-spacing:-0.057px;word-spacing:0.057px;font-kerning:none;">By volume</div>
<div style="position:absolute;left:73.1px;top:579px;line-height:0;white-space:nowrap;color:#181e25;font-family:'Liberation Sans',sans-serif;font-size:25px;font-weight:normal;letter-spacing:0.080px;word-spacing:-0.080px;font-kerning:none;">All keywords</div>
<div style="position:absolute;left:302.8px;top:579px;line-height:0;white-space:nowrap;color:#181e25;font-family:'Liberation Sans',sans-serif;font-size:25px;font-weight:normal;letter-spacing:-0.720px;font-kerning:none;">13,130</div>
<div style="position:absolute;left:115.3px;top:663px;line-height:0;white-space:nowrap;color:#181e25;font-family:'Liberation Sans',sans-serif;font-size:25px;font-weight:normal;letter-spacing:0.700px;font-kerning:none;">best</div>
<div style="position:absolute;left:333.4px;top:663px;line-height:0;white-space:nowrap;color:#181e25;font-family:'Liberation Sans',sans-serif;font-size:25px;font-weight:normal;letter-spacing:0.150px;font-kerning:none;">779</div>
<div style="position:absolute;left:115.3px;top:751px;line-height:0;white-space:nowrap;color:#181e25;font-family:'Liberation Sans',sans-serif;font-size:25px;font-weight:normal;letter-spacing:0.520px;font-kerning:none;">rental</div>
<div style="position:absolute;left:333px;top:751px;line-height:0;white-space:nowrap;color:#181e25;font-family:'Liberation Sans',sans-serif;font-size:25px;font-weight:normal;letter-spacing:0.250px;font-kerning:none;">567</div>
<div style="position:absolute;left:115.3px;top:839px;line-height:0;white-space:nowrap;color:#181e25;font-family:'Liberation Sans',sans-serif;font-size:25px;font-weight:normal;letter-spacing:0.767px;font-kerning:none;">rent</div>
<div style="position:absolute;left:333.3px;top:839px;line-height:0;white-space:nowrap;color:#181e25;font-family:'Liberation Sans',sans-serif;font-size:25px;font-weight:normal;letter-spacing:0.300px;font-kerning:none;">527</div>
<div style="position:absolute;left:115.3px;top:927px;line-height:0;white-space:nowrap;color:#181e25;font-family:'Liberation Sans',sans-serif;font-size:25px;font-weight:normal;letter-spacing:0.700px;font-kerning:none;">list</div>
<div style="position:absolute;left:332px;top:927px;line-height:0;white-space:nowrap;color:#181e25;font-family:'Liberation Sans',sans-serif;font-size:25px;font-weight:normal;letter-spacing:0.750px;font-kerning:none;">359</div>
<div style="position:absolute;left:115.3px;top:1015px;line-height:0;white-space:nowrap;color:#181e25;font-family:'Liberation Sans',sans-serif;font-size:25px;font-weight:normal;letter-spacing:0.650px;font-kerning:none;">use</div>
<div style="position:absolute;left:335.96px;top:1015px;line-height:0;white-space:nowrap;color:#181e25;font-family:'Liberation Sans',sans-serif;font-size:25px;font-weight:normal;letter-spacing:0.000px;font-kerning:none;transform:scaleX(0.9400);transform-origin:0 0;">315</div>
<div style="position:absolute;left:519.1px;top:496px;line-height:0;white-space:nowrap;color:#2f3338;font-family:'Liberation Sans',sans-serif;font-size:29.5px;font-weight:normal;letter-spacing:0.073px;word-spacing:-0.073px;font-kerning:none;">All keywords:</div>
<div style="position:absolute;left:699.9px;top:496px;line-height:0;white-space:nowrap;color:#2f3338;font-family:'Liberation Sans',sans-serif;font-size:29.5px;font-weight:bold;letter-spacing:-0.160px;font-kerning:none;">13,130</div>
<div style="position:absolute;left:814.6px;top:496px;line-height:0;white-space:nowrap;color:#2f3338;font-family:'Liberation Sans',sans-serif;font-size:29.5px;font-weight:normal;letter-spacing:-0.309px;word-spacing:0.309px;font-kerning:none;">Total Volume:</div>
<div style="position:absolute;left:1000.3px;top:496px;line-height:0;white-space:nowrap;color:#2f3338;font-family:'Liberation Sans',sans-serif;font-size:29.5px;font-weight:bold;letter-spacing:0.933px;font-kerning:none;">201,320</div>
<div style="position:absolute;left:1138.2px;top:496px;line-height:0;white-space:nowrap;color:#2f3338;font-family:'Liberation Sans',sans-serif;font-size:29.5px;font-weight:normal;letter-spacing:-0.844px;word-spacing:0.844px;font-kerning:none;">Average KD:</div>
<div style="position:absolute;left:1306.6px;top:496px;line-height:0;white-space:nowrap;color:#2f3338;font-family:'Liberation Sans',sans-serif;font-size:29.5px;font-weight:bold;letter-spacing:-0.050px;font-kerning:none;">29%</div>
<div style="position:absolute;left:2016.8px;top:494.9px;line-height:0;white-space:nowrap;color:#ffffff;font-family:'Liberation Sans',sans-serif;font-size:29.5px;font-weight:normal;letter-spacing:0.218px;word-spacing:-0.218px;-webkit-text-stroke:0.35px #ffffff;font-kerning:none;">Send keywords</div>
<div style="position:absolute;left:2319.5px;top:494.7px;line-height:0;white-space:nowrap;color:#6c6e79;font-family:'Liberation Sans',sans-serif;font-size:29.5px;font-weight:normal;letter-spacing:0.600px;-webkit-text-stroke:0.35px #6c6e79;font-kerning:none;">Update</div>
<div style="position:absolute;left:2448px;top:495.7px;line-height:0;white-space:nowrap;color:#6c6e79;font-family:'Liberation Sans',sans-serif;font-size:24px;font-weight:normal;letter-spacing:1.050px;font-kerning:none;">73/15,000</div>
<div style="position:absolute;left:581.4px;top:579.3px;line-height:0;white-space:nowrap;color:#181e25;font-family:'Liberation Sans',sans-serif;font-size:25.5px;font-weight:normal;letter-spacing:-0.117px;font-kerning:none;">Keyword</div>
<div style="position:absolute;left:1500.2px;top:579.3px;line-height:0;white-space:nowrap;color:#181e25;font-family:'Liberation Sans',sans-serif;font-size:25.5px;font-weight:normal;letter-spacing:0.400px;font-kerning:none;">Intent</div>
<div style="position:absolute;left:1687.5px;top:579.3px;line-height:0;white-space:nowrap;color:#181e25;font-family:'Liberation Sans',sans-serif;font-size:25.5px;font-weight:normal;letter-spacing:-0.700px;font-kerning:none;">Volume</div>
<div style="position:absolute;left:1853px;top:579.3px;line-height:0;white-space:nowrap;color:#181e25;font-family:'Liberation Sans',sans-serif;font-size:25.5px;font-weight:normal;letter-spacing:-0.250px;font-kerning:none;">Trend</div>
<div style="position:absolute;left:2030.84px;top:579.3px;line-height:0;white-space:nowrap;color:#181e25;font-family:'Liberation Sans',sans-serif;font-size:25.5px;font-weight:normal;letter-spacing:0.000px;font-kerning:none;transform:scaleX(0.9312);transform-origin:0 0;">KD</div>
<div style="position:absolute;left:2071.75px;top:579.3px;line-height:0;white-space:nowrap;color:#181e25;font-family:'Liberation Sans',sans-serif;font-size:25.5px;font-weight:normal;letter-spacing:0.000px;font-kerning:none;transform:scaleX(0.7476);transform-origin:0 0;">%</div>
<div style="position:absolute;left:2135.26px;top:579.3px;line-height:0;white-space:nowrap;color:#181e25;font-family:'Liberation Sans',sans-serif;font-size:25.5px;font-weight:normal;letter-spacing:0.000px;word-spacing:-0.000px;font-kerning:none;transform:scaleX(0.9434);transform-origin:0 0;">CPC (USD)</div>
<div style="position:absolute;left:2314.3px;top:579.3px;line-height:0;white-space:nowrap;color:#181e25;font-family:'Liberation Sans',sans-serif;font-size:25.5px;font-weight:normal;letter-spacing:0.033px;font-kerning:none;">Com.</div>
<div style="position:absolute;left:2414.42px;top:579.3px;line-height:0;white-space:nowrap;color:#181e25;font-family:'Liberation Sans',sans-serif;font-size:25.5px;font-weight:normal;letter-spacing:0.000px;font-kerning:none;transform:scaleX(0.8774);transform-origin:0 0;">SF</div>
<div style="position:absolute;left:2648.7px;top:579.3px;line-height:0;white-space:nowrap;color:#181e25;font-family:'Liberation Sans',sans-serif;font-size:25.5px;font-weight:normal;letter-spacing:0.500px;font-kerning:none;">Updated</div>
<div style="position:absolute;left:622.5px;top:667.8px;line-height:0;white-space:nowrap;color:#2767c6;font-family:'Liberation Sans',sans-serif;font-size:29.5px;font-weight:normal;letter-spacing:0.060px;word-spacing:-0.060px;font-kerning:none;">camping gear</div>
<div style="position:absolute;left:1716.9px;top:667.8px;line-height:0;white-space:nowrap;color:#181e25;font-family:'Liberation Sans',sans-serif;font-size:29.5px;font-weight:normal;letter-spacing:0.420px;font-kerning:none;">22,200</div>
<div style="position:absolute;left:2016.5px;top:667.8px;line-height:0;white-space:nowrap;color:#181e25;font-family:'Liberation Sans',sans-serif;font-size:29.5px;font-weight:normal;letter-spacing:0.420px;font-kerning:none;">66</div>
<div style="position:absolute;left:2200.7px;top:667.8px;line-height:0;white-space:nowrap;color:#181e25;font-family:'Liberation Sans',sans-serif;font-size:29.5px;font-weight:normal;letter-spacing:0.420px;font-kerning:none;">0.29</div>
<div style="position:absolute;left:2319.31px;top:667.8px;line-height:0;white-space:nowrap;color:#181e25;font-family:'Liberation Sans',sans-serif;font-size:29.5px;font-weight:normal;letter-spacing:0.000px;font-kerning:none;transform:scaleX(0.9463);transform-origin:0 0;">1.00</div>
<div style="position:absolute;left:2471.8px;top:667.8px;line-height:0;white-space:nowrap;color:#6c6e79;font-family:'Liberation Sans',sans-serif;font-size:29.5px;font-weight:normal;letter-spacing:0.420px;font-kerning:none;">9</div>
<div style="position:absolute;left:2573.3px;top:667.8px;line-height:0;white-space:nowrap;color:#181e25;font-family:'Liberation Sans',sans-serif;font-size:29.5px;font-weight:normal;letter-spacing:0.071px;word-spacing:-0.071px;font-kerning:none;">Last week</div>
<div style="position:absolute;left:622.5px;top:755.8px;line-height:0;white-space:nowrap;color:#2767c6;font-family:'Liberation Sans',sans-serif;font-size:29.5px;font-weight:normal;letter-spacing:0.115px;word-spacing:-0.115px;font-kerning:none;">camping gear and</div>
<div style="position:absolute;left:1733.3px;top:755.8px;line-height:0;white-space:nowrap;color:#181e25;font-family:'Liberation Sans',sans-serif;font-size:29.5px;font-weight:normal;letter-spacing:0.725px;font-kerning:none;">5,400</div>
<div style="position:absolute;left:2016.5px;top:755.8px;line-height:0;white-space:nowrap;color:#181e25;font-family:'Liberation Sans',sans-serif;font-size:29.5px;font-weight:normal;letter-spacing:0.420px;font-kerning:none;">48</div>
<div style="position:absolute;left:2200.7px;top:755.8px;line-height:0;white-space:nowrap;color:#181e25;font-family:'Liberation Sans',sans-serif;font-size:29.5px;font-weight:normal;letter-spacing:0.420px;font-kerning:none;">0.29</div>
<div style="position:absolute;left:2319.31px;top:755.8px;line-height:0;white-space:nowrap;color:#181e25;font-family:'Liberation Sans',sans-serif;font-size:29.5px;font-weight:normal;letter-spacing:0.000px;font-kerning:none;transform:scaleX(0.9463);transform-origin:0 0;">1.00</div>
<div style="position:absolute;left:2470.8px;top:755.8px;line-height:0;white-space:nowrap;color:#6c6e79;font-family:'Liberation Sans',sans-serif;font-size:29.5px;font-weight:normal;letter-spacing:0.420px;font-kerning:none;">10</div>
<div style="position:absolute;left:2573.3px;top:755.8px;line-height:0;white-space:nowrap;color:#181e25;font-family:'Liberation Sans',sans-serif;font-size:29.5px;font-weight:normal;letter-spacing:0.071px;word-spacing:-0.071px;font-kerning:none;">Last week</div>
<div style="position:absolute;left:622.5px;top:843.8px;line-height:0;white-space:nowrap;color:#2767c6;font-family:'Liberation Sans',sans-serif;font-size:29.5px;font-weight:normal;letter-spacing:-0.071px;word-spacing:0.071px;font-kerning:none;">camp gear</div>
<div style="position:absolute;left:1732.7px;top:843.8px;line-height:0;white-space:nowrap;color:#181e25;font-family:'Liberation Sans',sans-serif;font-size:29.5px;font-weight:normal;letter-spacing:0.675px;font-kerning:none;">4,400</div>
<div style="position:absolute;left:2016.5px;top:843.8px;line-height:0;white-space:nowrap;color:#181e25;font-family:'Liberation Sans',sans-serif;font-size:29.5px;font-weight:normal;letter-spacing:0.420px;font-kerning:none;">58</div>
<div style="position:absolute;left:2200.7px;top:843.8px;line-height:0;white-space:nowrap;color:#181e25;font-family:'Liberation Sans',sans-serif;font-size:29.5px;font-weight:normal;letter-spacing:0.420px;font-kerning:none;">0.40</div>
<div style="position:absolute;left:2319.31px;top:843.8px;line-height:0;white-space:nowrap;color:#181e25;font-family:'Liberation Sans',sans-serif;font-size:29.5px;font-weight:normal;letter-spacing:0.000px;font-kerning:none;transform:scaleX(0.9463);transform-origin:0 0;">1.00</div>
<div style="position:absolute;left:2471.8px;top:843.8px;line-height:0;white-space:nowrap;color:#6c6e79;font-family:'Liberation Sans',sans-serif;font-size:29.5px;font-weight:normal;letter-spacing:0.420px;font-kerning:none;">6</div>
<div style="position:absolute;left:2599.3px;top:843.8px;line-height:0;white-space:nowrap;color:#181e25;font-family:'Liberation Sans',sans-serif;font-size:29.5px;font-weight:normal;letter-spacing:0.140px;word-spacing:-0.140px;font-kerning:none;">2 weeks</div>
<div style="position:absolute;left:622.5px;top:931.8px;line-height:0;white-space:nowrap;color:#2767c6;font-family:'Liberation Sans',sans-serif;font-size:29.5px;font-weight:normal;letter-spacing:-0.038px;word-spacing:0.038px;font-kerning:none;">camping gear near me</div>
<div style="position:absolute;left:1732.7px;top:931.8px;line-height:0;white-space:nowrap;color:#181e25;font-family:'Liberation Sans',sans-serif;font-size:29.5px;font-weight:normal;letter-spacing:0.675px;font-kerning:none;">4,400</div>
<div style="position:absolute;left:2016.5px;top:931.8px;line-height:0;white-space:nowrap;color:#181e25;font-family:'Liberation Sans',sans-serif;font-size:29.5px;font-weight:normal;letter-spacing:0.420px;font-kerning:none;">67</div>
<div style="position:absolute;left:2200.7px;top:931.8px;line-height:0;white-space:nowrap;color:#181e25;font-family:'Liberation Sans',sans-serif;font-size:29.5px;font-weight:normal;letter-spacing:0.420px;font-kerning:none;">0.35</div>
<div style="position:absolute;left:2319.31px;top:931.8px;line-height:0;white-space:nowrap;color:#181e25;font-family:'Liberation Sans',sans-serif;font-size:29.5px;font-weight:normal;letter-spacing:0.000px;font-kerning:none;transform:scaleX(0.9463);transform-origin:0 0;">1.00</div>
<div style="position:absolute;left:2471.8px;top:931.8px;line-height:0;white-space:nowrap;color:#6c6e79;font-family:'Liberation Sans',sans-serif;font-size:29.5px;font-weight:normal;letter-spacing:0.420px;font-kerning:none;">6</div>
<div style="position:absolute;left:2573.3px;top:931.8px;line-height:0;white-space:nowrap;color:#181e25;font-family:'Liberation Sans',sans-serif;font-size:29.5px;font-weight:normal;letter-spacing:0.071px;word-spacing:-0.071px;font-kerning:none;">Last week</div>
<div style="position:absolute;left:621.5px;top:1019.8px;line-height:0;white-space:nowrap;color:#2767c6;font-family:'Liberation Sans',sans-serif;font-size:29.5px;font-weight:normal;letter-spacing:0.250px;word-spacing:-0.250px;font-kerning:none;">best camping gear</div>
<div style="position:absolute;left:1732.7px;top:1019.8px;line-height:0;white-space:nowrap;color:#181e25;font-family:'Liberation Sans',sans-serif;font-size:29.5px;font-weight:normal;letter-spacing:0.675px;font-kerning:none;">2,400</div>
<div style="position:absolute;left:2016.5px;top:1019.8px;line-height:0;white-space:nowrap;color:#181e25;font-family:'Liberation Sans',sans-serif;font-size:29.5px;font-weight:normal;letter-spacing:0.420px;font-kerning:none;">39</div>
<div style="position:absolute;left:2200.7px;top:1019.8px;line-height:0;white-space:nowrap;color:#181e25;font-family:'Liberation Sans',sans-serif;font-size:29.5px;font-weight:normal;letter-spacing:0.420px;font-kerning:none;">0.25</div>
<div style="position:absolute;left:2319.31px;top:1019.8px;line-height:0;white-space:nowrap;color:#181e25;font-family:'Liberation Sans',sans-serif;font-size:29.5px;font-weight:normal;letter-spacing:0.000px;font-kerning:none;transform:scaleX(0.9463);transform-origin:0 0;">1.00</div>
<div style="position:absolute;left:2471.8px;top:1019.8px;line-height:0;white-space:nowrap;color:#6c6e79;font-family:'Liberation Sans',sans-serif;font-size:29.5px;font-weight:normal;letter-spacing:0.420px;font-kerning:none;">5</div>
<div style="position:absolute;left:2599.3px;top:1019.8px;line-height:0;white-space:nowrap;color:#181e25;font-family:'Liberation Sans',sans-serif;font-size:29.5px;font-weight:normal;letter-spacing:0.140px;word-spacing:-0.140px;font-kerning:none;">2 weeks</div>
</body></html>
